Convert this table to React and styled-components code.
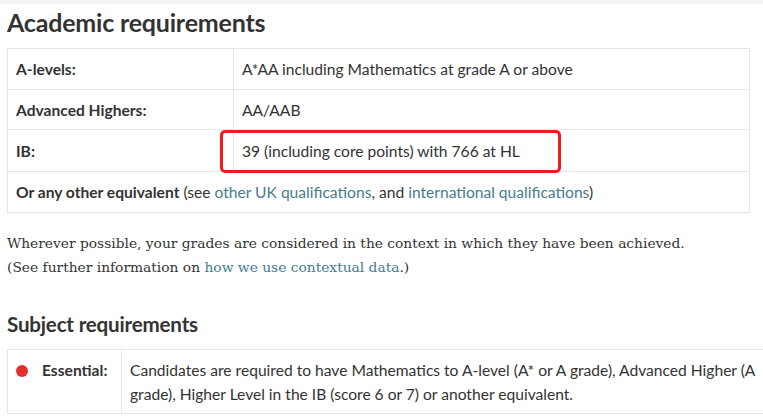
import React from 'react';
import styled, { createGlobalStyle } from 'styled-components';

const GlobalStyle = createGlobalStyle`
  html, body {
    margin: 0;
    padding: 0;
    background: #fff;
    overflow: hidden;
  }
  body {
    width: 763px;
    height: 420px;
  }
`;

const Page = styled.div`
  position: relative;
  width: 763px;
  height: 420px;
  overflow: hidden;
  background: #fff;
  color: #333;
  font-family: Lato, 'Noto Sans', sans-serif;
`;

const TopBand = styled.div`
  height: 4px;
  background: #f4f4f4;
`;

const Content = styled.div`
  padding-left: 7px;
`;

const Heading = styled.h2`
  margin: ${(p) => p.top}px 0 0;
  font-size: ${(p) => p.size}px;
  line-height: ${(p) => p.lh}px;
  font-weight: 700;
  color: #333;
  letter-spacing: -0.2px;
`;

const Table = styled.table`
  border-collapse: collapse;
  width: ${(p) => p.width}px;
  margin-top: ${(p) => p.top}px;
  font-size: 15.6px;
  box-shadow: 0 1px 2px rgba(0, 0, 0, 0.04);
`;

const Cell = styled.td`
  position: relative;
  border: 1px solid #e6e6e6;
  height: ${(p) => p.h || 39}px;
  padding: 0 8px;
  vertical-align: middle;
  width: ${(p) => (p.w ? `${p.w}px` : 'auto')};
  font-weight: ${(p) => (p.bold ? 700 : 400)};
`;

const Label = styled.strong`
  font-weight: 700;
`;

const Link = styled.a`
  color: #457c91;
  text-decoration: none;
`;

const Highlight = styled.span`
  position: absolute;
  left: -14px;
  top: 0;
  width: 341px;
  height: 43px;
  box-sizing: border-box;
  border: 3px solid #f01c1c;
  border-radius: 5px;
  pointer-events: none;
`;

const Paragraph = styled.p`
  margin: 18px 0 0;
  font-family: 'DejaVu Serif', 'Liberation Serif', serif;
  font-size: 13.8px;
  line-height: 24px;
  color: #333;
`;

const Dot = styled.span`
  display: inline-block;
  width: 12px;
  height: 12px;
  border-radius: 50%;
  background: #e2302c;
  margin-right: 14px;
  vertical-align: -1px;
`;

const EssentialCell = styled.td`
  border: 1px solid #e6e6e6;
  width: 97px;
  padding: 8px 8px 7px;
  vertical-align: top;
  line-height: 24px;
  white-space: nowrap;
`;

const SubjectText = styled.td`
  border: 1px solid #e6e6e6;
  border-right: none;
  padding: 8px 8px 7px;
  vertical-align: top;
  line-height: 24px;
`;

export default function App() {
  return (
    <Page>
      <GlobalStyle />
      <TopBand />
      <Content>
        <Heading size={25} lh={34} top={1}>Academic requirements</Heading>
        <Table width={743} top={9}>
          <tbody>
            <tr>
              <Cell w={209} h={40} bold>A-levels:</Cell>
              <Cell h={40}>A*AA including Mathematics at grade A or above</Cell>
            </tr>
            <tr>
              <Cell bold>Advanced Highers:</Cell>
              <Cell>AA/AAB</Cell>
            </tr>
            <tr>
              <Cell h={41} bold>IB:</Cell>
              <Cell h={41}>
                <Highlight />
                39 (including core points) with 766 at HL
              </Cell>
            </tr>
            <tr>
              <Cell colSpan={2} h={40}>
                <Label>Or any other equivalent</Label> (see{' '}
                <Link>other UK qualifications</Link>, and{' '}
                <Link>international qualifications</Link>)
              </Cell>
            </tr>
          </tbody>
        </Table>
        <Paragraph>
          Wherever possible, your grades are considered in the context in which they have been achieved.
          <br />
          (See further information on <Link>how we use contextual data</Link>.)
        </Paragraph>
        <Heading size={20.6} lh={28} top={31}>Subject requirements</Heading>
        <Table width={800} top={11}>
          <tbody>
            <tr>
              <EssentialCell>
                <Dot />
                <Label>Essential:</Label>
              </EssentialCell>
              <SubjectText>
                Candidates are required to have Mathematics to A-level (A* or A grade), Advanced Higher (A
                <br />
                grade), Higher Level in the IB (score 6 or 7) or another equivalent.
              </SubjectText>
            </tr>
          </tbody>
        </Table>
      </Content>
    </Page>
  );
}
